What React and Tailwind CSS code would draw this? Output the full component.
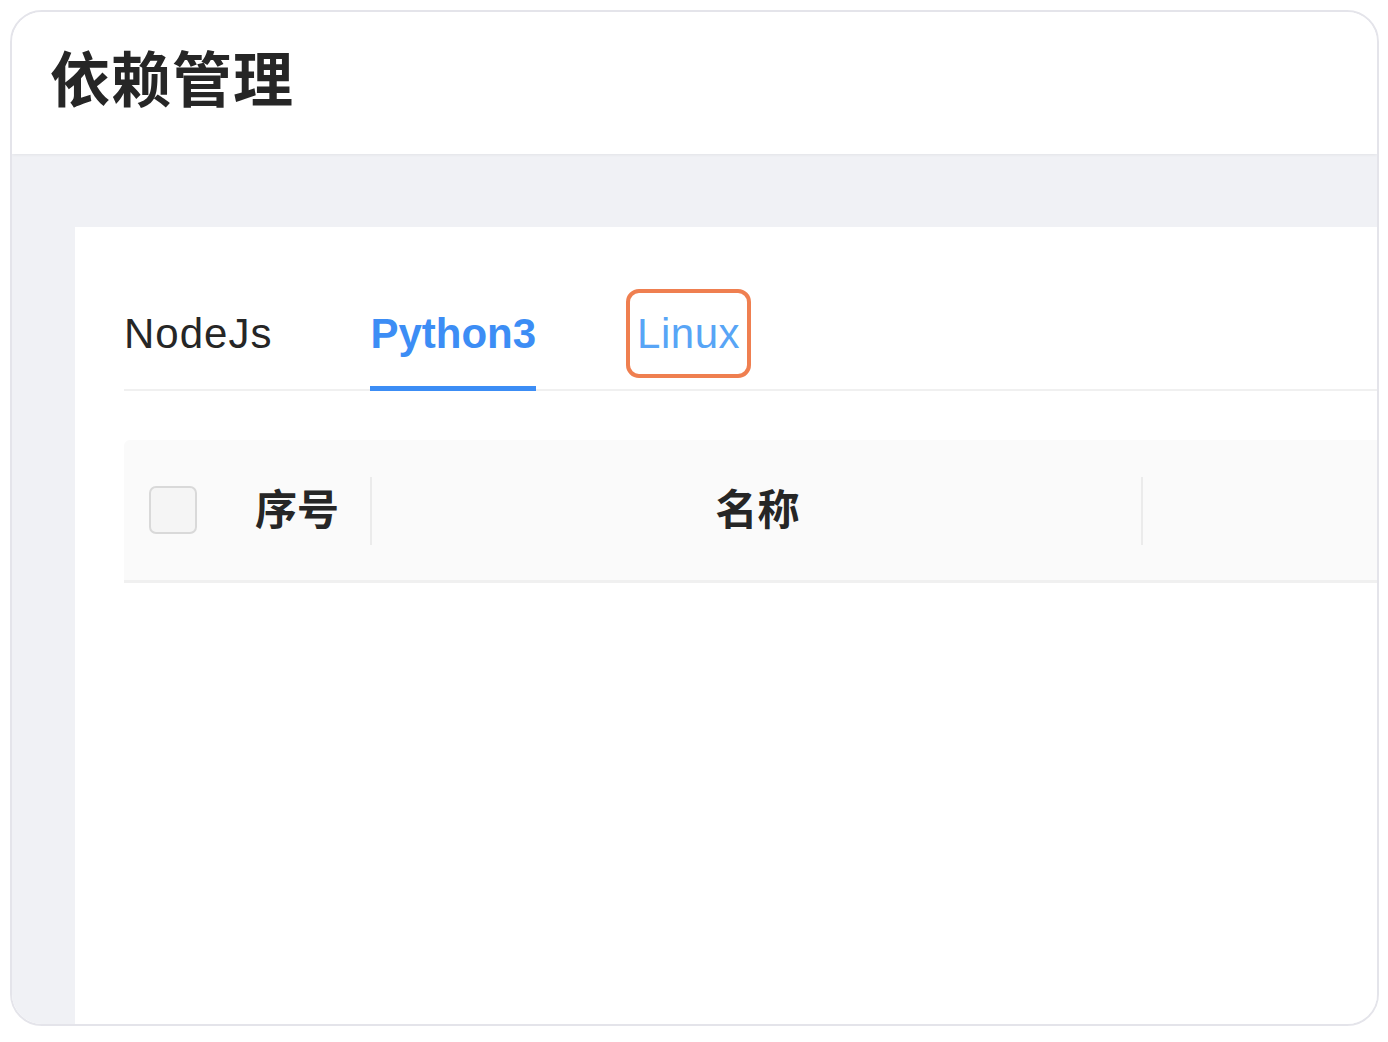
import React from 'react';

const font = { fontFamily: '"Liberation Sans", "Noto Sans CJK SC", sans-serif' };

export default function App() {
  return (
    <div className="w-full h-[1042px] bg-white pt-[10px] px-[10px]" style={font}>
      {/* window frame */}
      <div className="h-[1016px] w-[1369px] border-2 border-[#e4e4ea] rounded-[32px] overflow-hidden flex flex-col">
        {/* header */}
        <div className="h-[142px] shrink-0 bg-white flex items-center pl-[38px] shadow-[0_1px_3px_rgba(0,0,0,0.06)] z-10">
          <h1 className="text-[60px] leading-none font-bold text-[#262626] tracking-[1px] -mt-[2px]">依赖管理</h1>
        </div>

        {/* body */}
        <div className="flex-1 bg-[#f0f1f5] pl-[63px] pt-[73px] flex">
          <div className="flex-1 bg-white pl-[49px] pt-[62px]">
            {/* tabs */}
            <div className="flex items-end border-b-2 border-[#f0f0f0] h-[102px]">
              <div className="flex flex-col -mb-[2px]">
                <div className="h-[89px] flex items-center text-[42px] tracking-[1px] text-[#262626]">NodeJs</div>
                <div className="h-[13px]" />
              </div>
              <div className="flex flex-col ml-[98px] -mb-[2px]">
                <div className="h-[89px] flex items-center text-[42px] text-[#3c8df5] font-semibold">Python3</div>
                <div className="h-[8px]" />
                <div className="h-[5px] bg-[#3c8df5]" />
              </div>
              <div className="flex flex-col ml-[90px] -mb-[2px]">
                <div className="h-[89px] flex items-center px-[7px] border-[4px] border-[#ef7f50] rounded-[13px] text-[42px] tracking-[0.5px] text-[#58a5f6]">Linux</div>
                <div className="h-[13px]" />
              </div>
            </div>

            {/* table header */}
            <div className="mt-[49px] h-[143px] bg-[#fafafa] border-b-[3px] border-[#f0f0f0] rounded-tl-[6px] flex items-center">
              <div className="w-[248px] h-full flex items-center pl-[25px] relative">
                <div className="w-[48px] h-[48px] rounded-[7px] border-2 border-[#d9d9d9] bg-[#f5f5f5]" />
                <span className="ml-[58px] text-[42px] font-semibold text-[#262626]">序号</span>
                <div className="absolute right-0 top-[37px] w-[2px] h-[68px] bg-[#ebebeb]" />
              </div>
              <div className="w-[771px] h-full flex items-center justify-center relative">
                <span className="text-[42px] font-semibold text-[#262626]">名称</span>
                <div className="absolute right-0 top-[37px] w-[2px] h-[68px] bg-[#ebebeb]" />
              </div>
              <div className="flex-1" />
            </div>
          </div>
        </div>
      </div>
    </div>
  );
}
